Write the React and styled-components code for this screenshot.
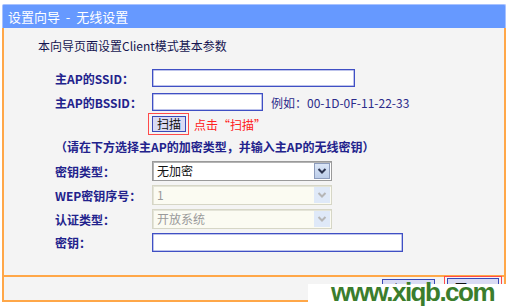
import React from 'react';
import styled, { createGlobalStyle } from 'styled-components';

const GlobalStyle = createGlobalStyle`
    html, body {
        margin: 0;
        padding: 0;
        background: #ffffff;
    }
    body {
        font-family: "Noto Sans CJK SC", "Liberation Sans", sans-serif;
        font-size: 12px;
    }
`;

const Page = styled.div`
    position: relative;
    width: 510px;
    height: 307px;
    padding-top: 4px;
    box-sizing: border-box;
    overflow: hidden;
`;

const Frame = styled.div`
    margin-left: 2px;
    width: 504px;
`;

const Header = styled.div`
    height: 23px;
    background: #6699ff;
    border: 1px solid #a8c2ff;
    border-bottom: none;
    border-radius: 2px 2px 0 0;
    color: #ffffff;
    font-size: 13px;
    line-height: 23px;
    padding-left: 5px;
    white-space: pre;
    box-sizing: content-box;
`;

const Body = styled.div`
    background: #f4f4f4;
    border-left: 2px solid #ffa748;
    border-right: 2px solid #ffa748;
    padding: 9px 0 23px 0;
`;

const Intro = styled.div`
    padding-left: 34px;
    height: 18px;
    line-height: 18px;
    color: #141450;
`;

const Form = styled.div`
    padding-left: 51px;
    margin-top: 14px;
`;

const Row = styled.div`
    display: flex;
    align-items: center;
    height: ${p => p.$h || 20}px;
    margin-top: ${p => p.$mt || 0}px;
`;

const Label = styled.div`
    width: 97px;
    flex: none;
    font-weight: bold;
    color: #22228c;
    white-space: nowrap;
`;

const TextInput = styled.div`
    width: ${p => p.$w}px;
    height: ${p => p.$h || 18}px;
    box-sizing: border-box;
    border: 1px solid #3f4fc4;
    box-shadow: inset 0 0 0 0.5px #7d88d8;
    background: #ffffff;
`;

const Example = styled.span`
    margin-left: 8px;
    color: #2b2b8a;
`;

const RedBox = styled.div`
    margin-left: -4px;
    width: 41px;
    height: 22px;
    box-sizing: border-box;
    border: 1px solid #ff4a4a;
    display: flex;
    align-items: center;
    padding-left: 3px;
`;

const Button = styled.div`
    width: ${p => p.$w || 34}px;
    height: ${p => p.$h || 16}px;
    box-sizing: border-box;
    border: 1px solid #3a48b8;
    background: #d9dbf4;
    color: #111111;
    font-size: 12px;
    line-height: ${p => (p.$h || 16) - 2}px;
    text-align: center;
    letter-spacing: ${p => p.$ls || 0}px;
`;

const Hint = styled.span`
    margin-left: 5px;
    color: #ff2020;
`;

const Note = styled.div`
    font-weight: bold;
    color: #22228c;
    white-space: nowrap;
`;

const Select = styled.div`
    width: 180px;
    height: 20px;
    box-sizing: border-box;
    display: flex;
    border: 1px solid ${p => (p.$disabled ? '#d6d6c6' : '#9a9a9a')};
    box-shadow: inset 1px 1px 0 ${p => (p.$disabled ? '#e4e4d8' : '#b4b4b4')};
    background: ${p => (p.$disabled ? '#fbfbf2' : '#ffffff')};
`;

const SelectValue = styled.div`
    flex: 1;
    padding-left: 4px;
    line-height: 18px;
    color: ${p => (p.$disabled ? '#9a9a9a' : '#111111')};
`;

const Arrow = styled.div`
    width: 16px;
    margin: 1px;
    box-sizing: border-box;
    display: flex;
    align-items: center;
    justify-content: center;
    background: ${p => (p.$disabled ? '#dfe9f8' : 'linear-gradient(#dbe6f7, #bccde9)')};
    border: 1px solid ${p => (p.$disabled ? '#dfe9f8' : '#8d9cbc')};
`;

const Footer = styled.div`
    height: 23px;
    background: #f4f4f4;
    border: 2px solid #ffa748;
    display: flex;
    justify-content: flex-end;
    align-items: flex-start;
    gap: 9px;
    padding-right: 2px;
`;

const PrevButton = styled(Button)`
    margin-top: 2px;
`;

const NextBox = styled.div`
    border: 1px solid #ff4a4a;
    padding: 1px 2px;
    margin-top: -1px;
`;

const Watermark = styled.div`
    position: absolute;
    left: 308px;
    top: 284px;
    width: 202px;
    height: 23px;
    background: #ffffff;
    color: #3b7d2d;
    font-family: "Liberation Sans", Arial, sans-serif;
    font-weight: bold;
    font-size: 26px;
    line-height: 16px;
    padding-left: 23px;
    box-sizing: border-box;
    letter-spacing: -1.5px;
    white-space: nowrap;
`;

function Chevron({ disabled }) {
    return (
        <svg width="10" height="8" viewBox="0 0 10 8">
            <path d="M1.5 2L5 5.5L8.5 2" fill="none" stroke={disabled ? '#b6b6b6' : '#2d3550'} strokeWidth="2" />
        </svg>
    );
}

function FakeSelect({ value, disabled }) {
    return (
        <Select $disabled={disabled}>
            <SelectValue $disabled={disabled}>{value}</SelectValue>
            <Arrow $disabled={disabled}><Chevron disabled={disabled} /></Arrow>
        </Select>
    );
}

export default function App() {
    return (
        <Page>
            <GlobalStyle />
            <Frame>
                <Header>{'设置向导  -  无线设置'}</Header>
                <Body>
                    <Intro>本向导页面设置Client模式基本参数</Intro>
                    <Form>
                        <Row $h={18}>
                            <Label>主AP的SSID：</Label>
                            <TextInput $w={203} />
                        </Row>
                        <Row $h={18} $mt={6}>
                            <Label>主AP的BSSID：</Label>
                            <TextInput $w={111} />
                            <Example>例如：00-1D-0F-11-22-33</Example>
                        </Row>
                        <Row $h={22} $mt={2}>
                            <Label />
                            <RedBox><Button>扫描</Button></RedBox>
                            <Hint>点击“扫描”</Hint>
                        </Row>
                        <Row $h={20} $mt={1}>
                            <Note>（请在下方选择主AP的加密类型，并输入主AP的无线密钥）</Note>
                        </Row>
                        <Row $h={20} $mt={5}>
                            <Label>密钥类型：</Label>
                            <FakeSelect value="无加密" />
                        </Row>
                        <Row $h={20} $mt={4}>
                            <Label>WEP密钥序号：</Label>
                            <FakeSelect value="1" disabled />
                        </Row>
                        <Row $h={20} $mt={4}>
                            <Label>认证类型：</Label>
                            <FakeSelect value="开放系统" disabled />
                        </Row>
                        <Row $h={19} $mt={4}>
                            <Label>密钥：</Label>
                            <TextInput $w={251} $h={19} />
                        </Row>
                    </Form>
                </Body>
                <Footer>
                    <PrevButton $w={53} $h={20} $ls={6}>上一步</PrevButton>
                    <NextBox><Button $w={52} $h={20} $ls={6}>下一步</Button></NextBox>
                </Footer>
            </Frame>
            <Watermark>www.xiqb.com</Watermark>
        </Page>
    );
}
